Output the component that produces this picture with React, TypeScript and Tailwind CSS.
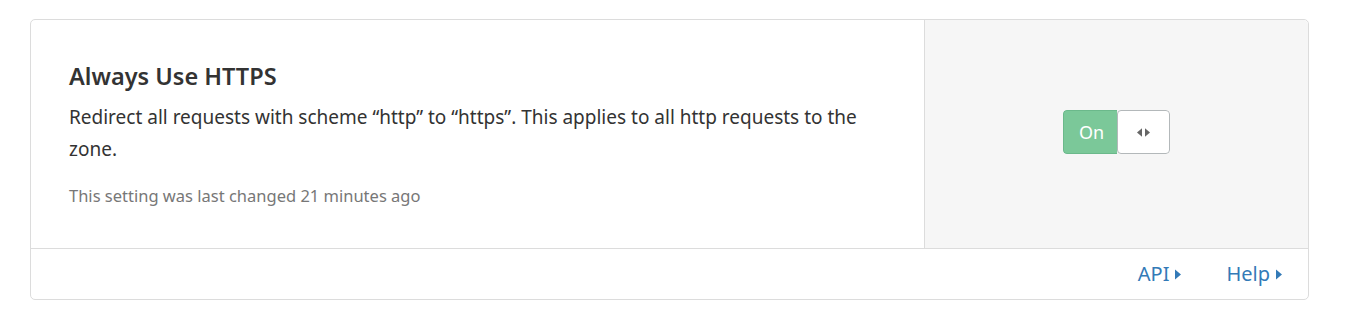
const Caret = ({ className }: { className?: string }) => (
  <svg viewBox="0 0 6 10" className={className} fill="currentColor">
    <path d="M0 0 L6 5 L0 10 Z" />
  </svg>
)

const App = () => (
  <div className="min-h-[312px] bg-white pl-[30px] pt-[19px] font-['Noto_Sans',sans-serif]">
    <div className="w-[1279px] rounded-[5px] border border-[#dcdcdc] bg-white">
      <div className="flex h-[228px]">
        <div className="flex-1 pl-[38px] pt-[41px]">
          <h3 className="text-[23.5px] font-semibold leading-[30px] text-[#333]">Always Use HTTPS</h3>
          <p className="mt-[10px] w-[800px] text-[19px] leading-[32px] text-[#333]">
            Redirect all requests with scheme “http” to “https”. This applies to all http requests to the zone.
          </p>
          <p className="mt-[19px] text-[16.5px] leading-[24px] text-[#777]">
            This setting was last changed 21 minutes ago
          </p>
        </div>
        <div className="flex w-[384px] items-center justify-center rounded-tr-[5px] border-l border-[#dcdcdc] bg-[#f6f6f6] pb-[4px]">
          <div className="flex h-[44px] overflow-hidden rounded-[4px]">
            <div className="flex w-[54px] items-center justify-center rounded-l-[4px] border border-r-0 border-[#6bb98b] bg-[#7bc899] pl-[2px] text-[18px] text-white">
              On
            </div>
            <div className="flex w-[53px] items-center justify-center rounded-[4px] border border-[#b3b8ba] bg-white text-[#666]">
              <Caret className="h-[9px] w-[5px] rotate-180" />
              <Caret className="ml-[3px] h-[9px] w-[5px]" />
            </div>
          </div>
        </div>
      </div>
      <div className="flex h-[51px] items-center justify-end gap-[45px] border-t border-[#dcdcdc] pr-[26px] text-[20px] text-[#337ab7]">
        <a href="#" className="flex items-center gap-[6px]">
          API
          <Caret className="h-[11px] w-[6px]" />
        </a>
        <a href="#" className="flex items-center gap-[6px]">
          Help
          <Caret className="h-[11px] w-[6px]" />
        </a>
      </div>
    </div>
  </div>
)

export default App
